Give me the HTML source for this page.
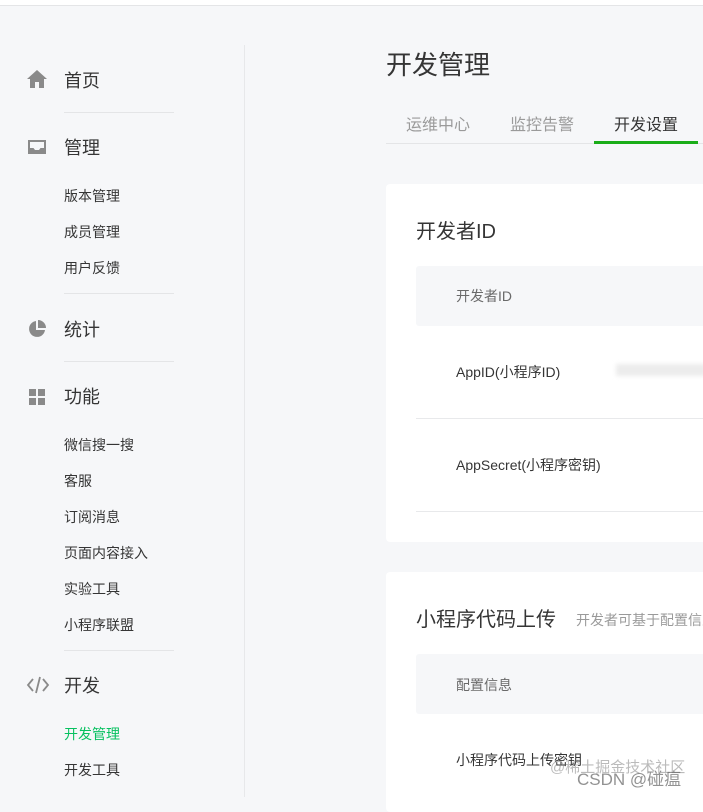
<!DOCTYPE html>
<html><head><meta charset="utf-8"><style>
*{margin:0;padding:0;box-sizing:border-box}
body{width:703px;height:797px;overflow:hidden;background:#f6f7f9;font-family:"Liberation Sans","Noto Sans CJK SC",sans-serif;color:#353535;position:relative}
.a{position:absolute;white-space:nowrap}
.top{left:0;top:0;width:703px;height:6px;background:#fff;border-bottom:1px solid #e4e5e7}
.side{left:244px;top:45px;width:1px;height:752px;background:#e7e8ea}
.h{font-size:18px;color:#353535;left:64px}
.s{font-size:14px;color:#353535;left:64px}
.ln{left:64px;width:110px;height:1px;background:#e4e5e7}
.ic{left:26px}
.card{background:#fff;left:386px;width:330px;border-radius:4px}
.gr{background:#f6f7f9;left:416px;width:300px;height:60px;border-radius:3px}
</style></head><body>
<div class="a top"></div>
<div class="a side"></div>

<svg class="a ic" style="top:68px" width="22" height="22" viewBox="0 0 22 22"><path d="M11 2 L1 11 H4 V20 H9 V14 H13 V20 H18 V11 H21 Z" fill="#8a8a8a"/></svg>
<div class="a h" style="top:67px">首页</div>
<div class="a ln" style="top:112px"></div>
<svg class="a ic" style="top:136px" width="22" height="22" viewBox="0 0 22 22"><path d="M2 4 H20 V18 H2 Z M4 6 V12 H7.5 L9 14 H13 L14.5 12 H18 V6 Z" fill="#8a8a8a" fill-rule="evenodd"/></svg>
<div class="a h" style="top:134px">管理</div>
<div class="a s" style="top:186px">版本管理</div>
<div class="a s" style="top:222px">成员管理</div>
<div class="a s" style="top:258px">用户反馈</div>
<div class="a ln" style="top:293px"></div>
<svg class="a ic" style="top:318px" width="22" height="22" viewBox="0 0 22 22"><path d="M10 3 A8 8 0 1 0 19 12 H10 Z" fill="#8a8a8a"/><path d="M12 2 V10 H20 A8 8 0 0 0 12 2 Z" fill="#8a8a8a"/></svg>
<div class="a h" style="top:316px">统计</div>
<div class="a ln" style="top:361px"></div>
<svg class="a ic" style="top:386px" width="22" height="22" viewBox="0 0 22 22"><rect x="3" y="3" width="7" height="7" fill="#8a8a8a"/><rect x="12" y="3" width="7" height="7" fill="#8a8a8a"/><rect x="3" y="12" width="7" height="7" fill="#8a8a8a"/><rect x="12" y="12" width="7" height="7" fill="#8a8a8a"/></svg>
<div class="a h" style="top:383px">功能</div>
<div class="a s" style="top:435px">微信搜一搜</div>
<div class="a s" style="top:471px">客服</div>
<div class="a s" style="top:507px">订阅消息</div>
<div class="a s" style="top:543px">页面内容接入</div>
<div class="a s" style="top:579px">实验工具</div>
<div class="a s" style="top:615px">小程序联盟</div>
<div class="a ln" style="top:650px"></div>
<svg class="a ic" style="top:674px" width="24" height="22" viewBox="0 0 24 22"><path d="M7 5 L2 11 L7 17 M17 5 L22 11 L17 17 M14 3 L10 19" stroke="#8a8a8a" stroke-width="1.8" fill="none"/></svg>
<div class="a h" style="top:672px">开发</div>
<div class="a s" style="top:724px;color:#07c160">开发管理</div>
<div class="a s" style="top:760px">开发工具</div>

<div class="a" style="left:386px;top:45px;font-size:26px;color:#353535">开发管理</div>
<div class="a" style="left:386px;top:143px;width:317px;height:1px;background:#e4e5e7"></div>
<div class="a" style="left:406px;top:111px;font-size:16px;color:#9a9a9a">运维中心</div>
<div class="a" style="left:510px;top:111px;font-size:16px;color:#9a9a9a">监控告警</div>
<div class="a" style="left:614px;top:111px;font-size:16px;color:#353535">开发设置</div>
<div class="a" style="left:594px;top:141px;width:104px;height:3px;background:#1aad19"></div>

<div class="a card" style="top:184px;height:358px"></div>
<div class="a" style="left:416px;top:215px;font-size:20px">开发者ID</div>
<div class="a gr" style="top:266px"></div>
<div class="a" style="left:456px;top:286px;font-size:14px;color:#6a6a6a">开发者ID</div>
<div class="a" style="left:456px;top:362px;font-size:14px">AppID(小程序ID)</div>
<div class="a" style="left:616px;top:364px;width:90px;height:12px;background:#ececec;filter:blur(2px)"></div>
<div class="a" style="left:416px;top:418px;width:300px;height:1px;background:#e8e9eb"></div>
<div class="a" style="left:456px;top:455px;font-size:14px">AppSecret(小程序密钥)</div>
<div class="a" style="left:416px;top:511px;width:300px;height:1px;background:#e8e9eb"></div>

<div class="a card" style="top:572px;height:240px"></div>
<div class="a" style="left:416px;top:603px;font-size:20px">小程序代码上传</div>
<div class="a" style="left:576px;top:610px;font-size:14px;color:#9a9a9a">开发者可基于配置信息</div>
<div class="a gr" style="top:654px"></div>
<div class="a" style="left:456px;top:675px;font-size:14px;color:#6a6a6a">配置信息</div>
<div class="a" style="left:456px;top:750px;font-size:14px">小程序代码上传密钥</div>
<div class="a" style="left:550px;top:756px;font-size:15px;color:rgba(120,120,120,.5)">@稀土掘金技术社区</div>
<div class="a" style="left:577px;top:765px;font-size:17px;color:rgba(100,100,100,.7)">CSDN @碰瘟</div>
</body></html>
